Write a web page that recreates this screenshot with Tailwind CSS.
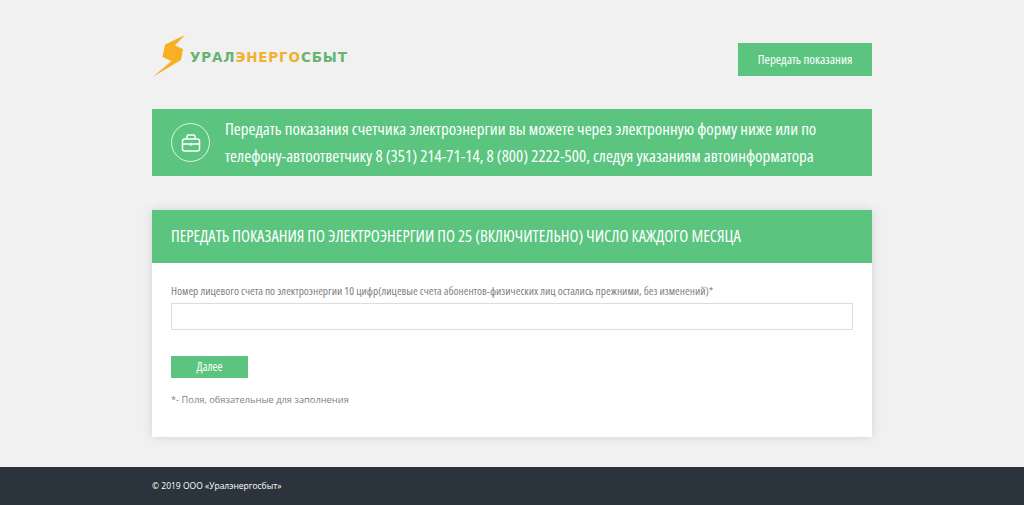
<!DOCTYPE html>
<html lang="ru">
<head>
  <meta charset="UTF-8" />
  <meta name="viewport" content="width=device-width, initial-scale=1.0"/>
  <title>Передать показания - Уралэнергосбыт</title>
  <script src="https://cdn.jsdelivr.net/npm/@tailwindcss/browser@4"></script>
</head>
<body class="h-[505px] overflow-hidden flex flex-col bg-[#f1f1f1] font-['Open_Sans',sans-serif]">

  <main class="w-[720px] mx-auto flex-grow">
    <!-- Header -->
    <header class="h-[109px] pt-[35px] flex justify-between items-start">
      <a href="#" class="flex items-center">
        <svg width="36" height="43" viewBox="0 0 36 43">
          <path d="M33 0 L13 9.5 L10.5 22 L19.5 26 L0.7 42 L29 25 L31 14 L23 10.5 Z" fill="#f7b021"/>
        </svg>
        <span class="ml-[2px] mt-[2px] font-['DejaVu_Sans',sans-serif] font-bold text-[13.5px] tracking-[0.85px] leading-none text-[#66b56f]">УРАЛ<span class="text-[#f3b02f]">ЭНЕРГО</span>СБЫТ</span>
      </a>
      <a href="#" class="mt-[8px] w-[134px] h-[33px] flex items-center justify-center bg-[#5bc57f] text-white text-[12.9px] font-normal [font-stretch:75%]">Передать показания</a>
    </header>

    <!-- Notice -->
    <section class="h-[67px] bg-[#5bc57f] flex items-center pl-[19px] text-white">
      <div class="w-[39px] h-[39px] rounded-full border border-white/80 flex items-center justify-center shrink-0">
        <svg width="20" height="18" viewBox="0 0 20 18" fill="none" stroke="white" stroke-width="1.5">
          <rect x="1.5" y="5" width="17" height="12" rx="2"/>
          <path d="M6 5 V2.5 Q6 1 7.5 1 H12.5 Q14 1 14 2.5 V5"/>
          <path d="M1.5 10 H8.5 M11.5 10 H18.5"/>
          <rect x="8.5" y="9" width="3" height="2.5" fill="white" stroke="none"/>
        </svg>
      </div>
      <p class="ml-[15px] mb-[2px] text-[16.9px] leading-[27px] font-normal [font-stretch:75%]">Передать показания счетчика электроэнергии вы можете через электронную форму ниже или по<br>телефону-автоответчику 8 (351) 214-71-14, 8 (800) 2222-500, следуя указаниям автоинформатора</p>
    </section>

    <!-- Form card -->
    <section class="mt-[34px] h-[227px] bg-white shadow-[0_0_10px_rgba(0,0,0,0.12)]">
      <h1 class="h-[53px] bg-[#5bc57f] flex items-center px-[19px] text-white text-[16.5px] font-normal [font-stretch:75%]">ПЕРЕДАТЬ ПОКАЗАНИЯ ПО ЭЛЕКТРОЭНЕРГИИ ПО 25 (ВКЛЮЧИТЕЛЬНО) ЧИСЛО КАЖДОГО МЕСЯЦА</h1>
      <form class="px-[19px] pt-[21px]">
        <label class="block text-[11.4px] leading-[14px] text-[#808080] font-normal [font-stretch:75%]">Номер лицевого счета по электроэнергии 10 цифр(лицевые счета абонентов-физических лиц остались прежними, без изменений)*</label>
        <input type="text" class="block mt-[5px] w-full h-[27px] border border-[#dcdcdc] bg-white" />
        <button type="button" class="block mt-[26px] w-[77px] h-[22px] bg-[#5bc57f] text-white text-[12px] font-normal [font-stretch:75%]">Далее</button>
        <p class="mt-[15px] text-[9.3px] leading-[14px] text-[#808080]">*- Поля, обязательные для заполнения</p>
      </form>
    </section>
  </main>

  <!-- Footer -->
  <footer class="h-[38px] bg-[#2b343c] shrink-0">
    <p class="w-[720px] mx-auto leading-[37px] text-[8.5px] font-medium text-white">© 2019 ООО «Уралэнергосбыт»</p>
  </footer>
</body>
</html>
